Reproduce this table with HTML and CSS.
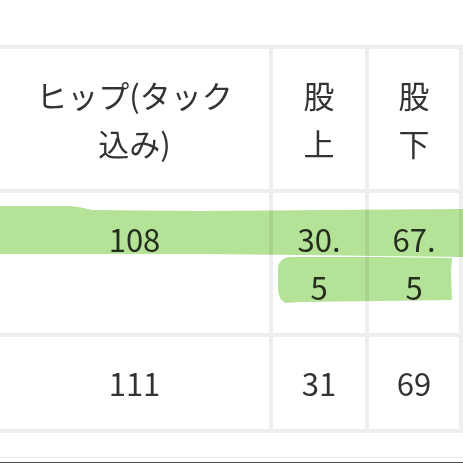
FILE: index.html
```html
<!DOCTYPE html>
<html lang="ja">
<head>
<meta charset="utf-8">
<link rel="stylesheet" href="styles.css">
</head>
<body>
<div class="page">
  <div class="top-space"></div>
  <div class="size-grid">
    <div class="cell c1">ヒップ(タック込み)</div>
    <div class="cell c2">股上</div>
    <div class="cell c3">股下</div>
    <div class="cell c1">108</div>
    <div class="cell c2">30.5</div>
    <div class="cell c3">67.5</div>
    <div class="cell c1">111</div>
    <div class="cell c2">31</div>
    <div class="cell c3">69</div>
  </div>
  <div class="footer">
    <div class="footer-light"></div>
    <div class="footer-dark"></div>
  </div>
  <svg class="marker" width="463" height="463" viewBox="0 0 463 463">
    <path d="M0 206 L70 206 Q82 207 92 210 L200 211 L330 210 L463 209 L463 257 L380 256 L300 255 L200 254 L80 254 L0 254 Z"/>
    <path d="M290 257 L380 257 L452 258 L451 272 L452 300 L380 301 L300 302 L286 303 Q278 300 278 288 L278 268 Q279 258 290 257 Z"/>
  </svg>
</div>
</body>
</html>
```

FILE: styles.css
```css
html, body {
  margin: 0;
  padding: 0;
  background: #ffffff;
}

.page {
  position: relative;
  width: 463px;
  height: 463px;
  overflow: hidden;
  font-family: "Noto Sans CJK JP", "Noto Sans", sans-serif;
  color: #333333;
}

.top-space {
  height: 45px;
}

.size-grid {
  display: grid;
  grid-template-columns: 273px 96px 94px;
  border-top: 4px solid #eeeeee;
}

.cell {
  border-right: 4px solid #eeeeee;
  border-bottom: 4px solid #eeeeee;
  padding: 22px 27px;
  font-size: 31px;
  line-height: 48px;
  text-align: center;
  word-break: break-all;
}

.c2, .c3 {
  padding-left: 22px;
  padding-right: 22px;
}

.footer {
  display: flex;
  flex-direction: column;
  padding-top: 24px;
}

.footer-light {
  height: 4px;
  border-top: 1px solid #e8e8e8;
}

.footer-dark {
  height: 3px;
  background: #4d4d4d;
}

.marker {
  position: absolute;
  left: 0;
  top: 0;
  mix-blend-mode: multiply;
  pointer-events: none;
}

.marker path {
  fill: #b4e296;
}
```
